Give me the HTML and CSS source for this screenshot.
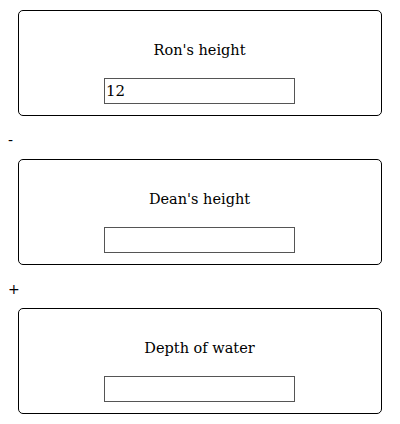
FILE: index.html
```html
<!DOCTYPE html>
<html>
<head>
<meta charset="utf-8">
<link rel="stylesheet" href="styles.css">
</head>
<body>
<div class="card">
  <p class="title">Ron's height</p>
  <input class="field" type="text" value="12">
</div>
<div class="op">-</div>
<div class="card">
  <p class="title">Dean's height</p>
  <input class="field" type="text" value="">
</div>
<div class="op">+</div>
<div class="card">
  <p class="title">Depth of water</p>
  <input class="field" type="text" value="">
</div>
</body>
</html>
```
FILE: styles.css
```css
body {
  margin: 0;
  padding: 10px 0;
  font-family: "DejaVu Serif", serif;
  font-size: 14.5px;
  color: #000;
  background: #fff;
}
.card {
  margin: 0 18px;
  border: 1px solid #000;
  border-radius: 5px;
  padding: 12px 1px 12px 0;
  text-align: center;
  height: 80px;
}
.title {
  margin: 19px 0 19px;
  line-height: 17px;
}
.field {
  box-sizing: border-box;
  width: 191px;
  height: 26px;
  border: 1px solid #555;
  padding: 0 1px;
  font-family: "DejaVu Serif", serif;
  font-size: 15px;
  color: #000;
  margin: 0;
  vertical-align: top;
}
.op {
  padding: 13px 8px 7px;
  line-height: 23px;
  font-family: "DejaVu Sans", sans-serif;
  font-size: 14px;
}
```
